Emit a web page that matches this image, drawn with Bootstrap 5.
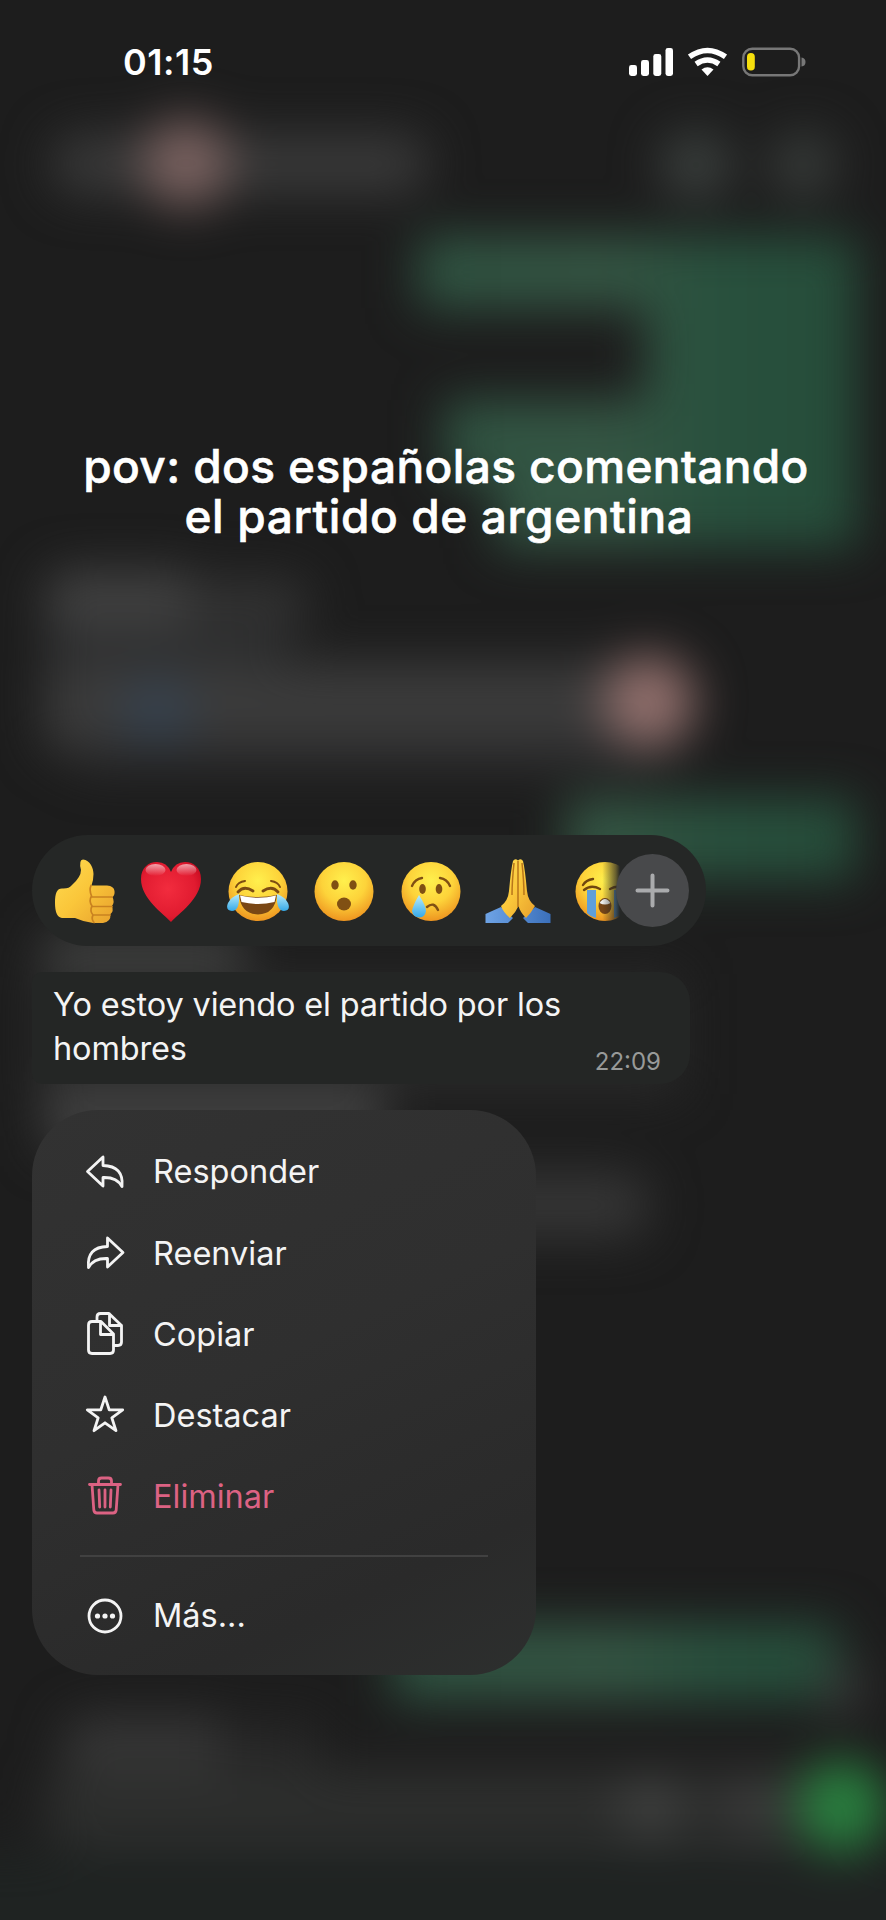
<!DOCTYPE html>
<html lang="es">
<head>
<meta charset="utf-8">
<meta name="viewport" content="width=device-width, initial-scale=1">
<title>Chat</title>
<link href="https://cdn.jsdelivr.net/npm/bootstrap@5.3.0/dist/css/bootstrap.min.css" rel="stylesheet">
<style>
body{background:#1d1d1d;font-family:Inter,"Liberation Sans",sans-serif;color:#f4f4f4}
.screen{width:886px;height:1920px}
.backdrop{z-index:0}
.front{z-index:1;height:100%}
.status{height:124px;padding:0 79px 0 123px}
.clock{font-size:36px;font-weight:600;line-height:1;letter-spacing:.5px;color:#fff}
.caption{margin-top:317px;height:100px;font-size:46px;font-weight:500;line-height:50px;letter-spacing:.4px;-webkit-text-stroke:.6px #fff;color:#fff;white-space:nowrap}
.cap1{padding-left:6px}
.cap2{padding-right:8px;letter-spacing:.6px}
.reactions{margin:294px 0 0 32px;width:674px;height:111px;border-radius:56px;background:#252726;padding-left:18px}
.reactions svg{width:68px;height:68px;margin-right:18.8px;flex:none}
.plus{width:73px;height:73px;background:#48494b;top:19px;left:584px}
.reactions .plus svg{width:73px;height:73px;margin:0}
.bubble{margin:26px 0 0 32px;width:658px;height:112px;background:#242625;border-radius:10px 30px 30px 10px;padding:11px 29px 0 21px;font-size:32.5px;line-height:44px}
.msg{letter-spacing:-.15px}
.stamp{font-size:24px;line-height:28px;color:#989a99}
.actions{margin:26px 0 0 32px;width:504px;height:565px;border-radius:66px;background:linear-gradient(155deg,#323232,#2f2f2f 45%,#2a2a2a 80%,#2d2f2e);padding:21px 48px 0}
.actions .item{height:81.2px;font-size:32.5px;padding-left:4px;line-height:1}
.actions .item span{padding-top:2px}
.actions .item svg{width:44px;height:48px;margin-right:25px;flex:none;fill:none;stroke:currentColor;stroke-width:2.8;stroke-linejoin:round;stroke-linecap:round}
.danger{color:#dc6283}
.rule{height:2px;background:#414141;margin:18px 0 18px 0}
</style>
</head>
<body>
<main class="screen position-relative overflow-hidden">
<svg class="backdrop position-absolute top-0 start-0" width="886" height="1920" viewBox="0 0 886 1920" aria-hidden="true">
<defs>
<filter id="soft" x="-100" y="-100" width="1086" height="2120" filterUnits="userSpaceOnUse" color-interpolation-filters="sRGB"><feGaussianBlur stdDeviation="24"/></filter>
<linearGradient id="gr" x1="400" x2="850" y1="0" y2="0" gradientUnits="userSpaceOnUse"><stop offset="0" stop-color="#2e5341"/><stop offset=".45" stop-color="#355644"/><stop offset=".72" stop-color="#28503d"/><stop offset="1" stop-color="#264d3a"/></linearGradient>
</defs>
<rect width="886" height="1920" fill="#1d1d1d"/>
<g filter="url(#soft)">
<rect x="-60" y="1850" width="1010" height="170" fill="#1f2322"/>
<rect x="52" y="134" width="376" height="60" rx="26" fill="#393939"/>
<circle cx="186" cy="163" r="44" fill="#7a6260"/>
<rect x="660" y="132" width="72" height="66" rx="30" fill="#3a3f3d"/><rect x="770" y="132" width="66" height="66" rx="30" fill="#373b39"/>
<path d="M418 236H858V548H496V480H444V400H646V308H418Z" fill="url(#gr)"/>
<rect x="46" y="570" width="150" height="66" rx="20" fill="#414141"/>
<rect x="190" y="578" width="118" height="56" rx="20" fill="#323232"/>
<rect x="44" y="630" width="240" height="60" fill="#2a2b2c"/>
<rect x="44" y="662" width="640" height="92" rx="20" fill="#3b3b3b"/>
<circle cx="157" cy="714" r="36" fill="#36424f"/>
<rect x="80" y="740" width="570" height="30" fill="#2d2d2e"/>
<circle cx="649" cy="701" r="46" fill="#916f6c"/>
<path d="M566 798H856V880H566Z" fill="url(#gr)"/>
<rect x="44" y="934" width="200" height="50" fill="#434443"/>
<rect x="34" y="974" width="646" height="120" fill="#292929"/>
<rect x="44" y="1084" width="340" height="66" fill="#404040"/>
<rect x="440" y="1172" width="208" height="66" rx="22" fill="#353535"/>
<rect x="392" y="1624" width="446" height="76" fill="url(#gr)"/>
<rect x="826" y="1664" width="36" height="50" fill="#393939"/>
<rect x="64" y="1716" width="170" height="64" rx="24" fill="#363636"/>
<rect x="220" y="1724" width="100" height="60" fill="#272727"/>
<rect x="44" y="1768" width="796" height="80" rx="30" fill="#2d2e2d"/>
<circle cx="650" cy="1808" r="30" fill="#414241"/><circle cx="756" cy="1808" r="30" fill="#3c3c3c"/>
<circle cx="842" cy="1806" r="46" fill="#29803f"/>
</g>
</svg>
<div class="front d-flex flex-column position-relative">
<header class="status d-flex align-items-center justify-content-between">
<div class="clock">01:15</div>
<svg width="178" height="32" viewBox="0 0 178 32" aria-label="Señal, wifi y batería">
<g fill="#fff"><rect x="0" y="19" width="8" height="11" rx="2.4"/><rect x="12" y="14" width="8" height="16" rx="2.4"/><rect x="24.300" y="8" width="8" height="22" rx="2.400"/><rect x="36.500" y="2" width="7.500" height="28" rx="2.400"/></g>
<g fill="none" stroke="#fff" stroke-width="5.4"><path d="M60.500 10.800Q78.500 -2 96.500 10.800"/><path d="M67.100 18Q78.500 10 89.900 18"/></g>
<path d="M72.500 23.500Q78.500 19 84.500 23.500L78.500 30Z" fill="#fff"/>
<rect x="114.300" y="2.800" width="55.800" height="26.400" rx="9" fill="none" stroke="#777" stroke-width="2.400"/>
<rect x="118" y="7" width="7.800" height="17.600" rx="3.800" fill="#f6df0d"/>
<path d="M172.500 11.500Q176.500 12 176.500 16T172.500 20.500Z" fill="#777"/>
</svg>
</header>
<div class="caption text-center"><div class="cap1">pov: dos españolas comentando</div><div class="cap2">el partido de argentina</div></div>

<section class="reactions position-relative d-flex align-items-center">
<svg viewBox="0 0 68 68" role="img" aria-label="Me gusta"><defs>
<linearGradient id="hand" x2="1" y2="1"><stop stop-color="#ffdc52"/><stop offset=".5" stop-color="#fac63a"/><stop offset="1" stop-color="#e7a02d"/></linearGradient>
<radialGradient id="face" cx=".5" cy=".32" r=".68"><stop stop-color="#fff04d"/><stop offset=".55" stop-color="#fdd33a"/><stop offset="1" stop-color="#ee9520"/></radialGradient>
<radialGradient id="love" cx=".45" cy=".45" r=".65"><stop stop-color="#f22c3e"/><stop offset=".7" stop-color="#e11b30"/><stop offset="1" stop-color="#c3091e"/></radialGradient>
<linearGradient id="gloss" x2="0" y2="1"><stop stop-color="#fff" stop-opacity=".6"/><stop offset="1" stop-color="#fff" stop-opacity="0"/></linearGradient>
<linearGradient id="tear" x2="0" y2="1"><stop stop-color="#b9ecfb"/><stop offset="1" stop-color="#35a9e8"/></linearGradient>
<linearGradient id="sleeve" x2="1" y2="0"><stop stop-color="#6ea3e5"/><stop offset="1" stop-color="#3b70bb"/></linearGradient></defs>
<path d="M5 46C5 36 7 31.500 12 31.500Q19 32 22 28Q31 20 31 13Q28.500 3 33 2.500C40 3 43.500 11 43.500 17Q43.500 23 41.500 28.500H57Q64 29 64.500 34Q65 38 62.500 40Q65 45 62 49Q64 54 60.500 57Q61 65 53 66H43Q34 65 25 61H12Q5 60 5 46Z" fill="url(#hand)"/>
<path d="M41 28.500Q39 33 41.500 39Q38.500 44 42 49Q39.500 54 43 58Q41 62 44 65.500M42 40H62M42 49.500H62M43 58H60" fill="none" stroke="#c98220" stroke-width="1.700" stroke-linecap="round"/></svg>
<svg viewBox="0 0 68 68" role="img" aria-label="Corazón"><path d="M34 65C27 57 4 42 4 22C4 11 11 5 20 5Q30 5 34 15Q38 5 48 5C57 5 64 11 64 22C64 42 41 57 34 65Z" fill="url(#love)"/><ellipse cx="18.500" cy="13" rx="10" ry="6" fill="url(#gloss)"/><ellipse cx="49.500" cy="13" rx="10" ry="6" fill="url(#gloss)"/></svg>
<svg viewBox="0 0 68 68" role="img" aria-label="Risa"><circle cx="34" cy="34.500" r="29.500" fill="url(#face)"/><g fill="none" stroke="#7c4b12" stroke-linecap="round"><path d="M12 30Q14 25 21 24M56 30Q54 25 47 24" stroke-width="2"/><path d="M14 35Q20 28 29 34M39 34Q48 28 54 35" stroke-width="2.800"/></g><path d="M15 38Q34 42 53 38Q51 57 34 57.500Q17 57 15 38Z" fill="#794715"/><path d="M16 38.500Q34 43 52 38.500L50.500 45Q34 49 17.500 45Z" fill="#fff"/><path d="M15 37Q16 54 8 54Q1 53 4 46Q7 40 15 37ZM53 37Q52 54 60 54Q67 53 64 46Q61 40 53 37Z" fill="url(#tear)"/></svg>
<svg viewBox="0 0 68 68" role="img" aria-label="Sorpresa"><circle cx="34" cy="34.500" r="29.500" fill="url(#face)"/><g fill="#805013"><ellipse cx="25" cy="28" rx="3.700" ry="4.700"/><ellipse cx="43" cy="28" rx="3.700" ry="4.700"/><ellipse cx="34" cy="47" rx="7" ry="6.500"/></g></svg>
<svg viewBox="0 0 68 68" role="img" aria-label="Tristeza"><circle cx="34" cy="34.500" r="29.500" fill="url(#face)"/><g fill="#805013"><ellipse cx="25.500" cy="32" rx="3.300" ry="5"/><ellipse cx="42" cy="32" rx="3.300" ry="5"/></g><path d="M15 29Q18 22 25 21M53 29Q50 22 43 21M30 50Q37 44 41 53" fill="none" stroke="#805013" stroke-width="2.400" stroke-linecap="round"/><path d="M22 38Q29 49 29 54Q28 60 22.500 60.500Q16 60 15 54Q16 48 22 38Z" fill="url(#tear)"/></svg>
<svg viewBox="0 0 68 68" role="img" aria-label="Manos juntas"><path d="M1.500 57Q8 54 17 50L29 61L24 66H1.500ZM66.500 57Q60 54 51 50L39 61L44 66H66.500Z" fill="url(#sleeve)"/><path d="M17 49Q24 44 25 34Q27 12 29 4Q31 1 34 3.500Q37 1 39 4Q41 12 43 34Q44 44 51 49Q47 56 42 61Q36 55 34.500 49Q32 55 26 61Q19 55 17 49Z" fill="url(#hand)"/><path d="M34 4V50M30 6Q28 25 28 38M38 6Q40 25 40 38" fill="none" stroke="#b8761a" stroke-width="1.500"/></svg>
<svg viewBox="0 0 68 68" role="img" aria-label="Llanto"><defs><linearGradient id="fade"><stop offset=".46" stop-color="#252726" stop-opacity="0"/><stop offset=".66" stop-color="#252726" stop-opacity=".7"/><stop offset=".72" stop-color="#252726"/></linearGradient></defs><circle cx="34" cy="34.500" r="29.500" fill="url(#face)"/><path d="M16 33H25V61Q20 60 16 56ZM43 33H52V56Q47 60 43 61Z" fill="#5f9fda"/><path d="M12 28Q15 23 22 22M13 33Q20 27 29 32M39 32Q48 27 55 33" fill="none" stroke="#70460f" stroke-width="2.400" stroke-linecap="round"/><ellipse cx="34" cy="49" rx="6.500" ry="8" fill="#774517"/><path d="M28.500 46Q34 38 39.500 46Q34 49 28.500 46Z" fill="#eee"/><rect width="68" height="68" fill="url(#fade)"/></svg>
<div class="plus position-absolute rounded-circle"><svg viewBox="0 0 73 73" aria-label="Más reacciones"><path d="M36.500 21.500V51.500M21.500 36.500H51.500" stroke="#aaabad" stroke-width="4" stroke-linecap="round"/></svg></div>
</section>

<section class="bubble d-flex justify-content-between">
<div class="msg text-nowrap"><div>Yo estoy viendo el partido por los</div><div>hombres</div></div>
<div class="stamp align-self-end mb-2">22:09</div>
</section>

<nav class="actions">
<div class="item d-flex align-items-center"><svg viewBox="0 0 44 48"><path d="M19 9L3.500 23.500L19 38V29.500Q33 29 38 38.500Q40 18 19 17.500Z"/></svg><span>Responder</span></div>
<div class="item d-flex align-items-center"><svg viewBox="0 0 44 48"><path d="M23.500 9L39 23.500L23.500 38V29.500Q9.500 29 4.500 38.500Q2.500 18 23.500 17.500Z"/></svg><span>Reenviar</span></div>
<div class="item d-flex align-items-center"><svg viewBox="0 0 44 48"><path d="M13 11V7Q13 3.500 16.500 3.500H25L37.500 15.500V32Q37.500 35.500 34 35.500H30M25.500 4V15.500H37.500"/><path d="M8 11.500H17L29.500 24V40Q29.500 43.500 26 43.500H8Q4.500 43.500 4.500 40V15Q4.500 11.500 8 11.500ZM16.500 12V24.500H29"/></svg><span>Copiar</span></div>
<div class="item d-flex align-items-center"><svg viewBox="0 0 44 48"><path d="M21 6L25.200 18.800H38.700L27.800 26.800L32 39.700L21 31.800L10 39.700L14.200 26.800L3.300 18.800H16.800Z"/></svg><span>Destacar</span></div>
<div class="item danger d-flex align-items-center"><svg viewBox="0 0 44 48"><path d="M5.500 12.500H36.500M8 12.500L9.800 38Q10.200 41 13 41H29Q31.800 41 32.200 38L34 12.500M14.500 12V9Q14.500 6 17.500 6H24.500Q27.500 6 27.500 9V12M15 18L15.700 35M21 18V35M27 18L26.300 35"/></svg><span>Eliminar</span></div>
<div class="rule"></div>
<div class="item d-flex align-items-center"><svg viewBox="0 0 44 48"><circle cx="21" cy="24" r="16"/><g fill="currentColor" stroke="none"><circle cx="13.500" cy="24" r="2.600"/><circle cx="21" cy="24" r="2.600"/><circle cx="28.500" cy="24" r="2.600"/></g></svg><span>Más...</span></div>
</nav>
</div>
</main>
<script src="https://cdn.jsdelivr.net/npm/bootstrap@5.3.0/dist/js/bootstrap.bundle.min.js"></script>
</body>
</html>
